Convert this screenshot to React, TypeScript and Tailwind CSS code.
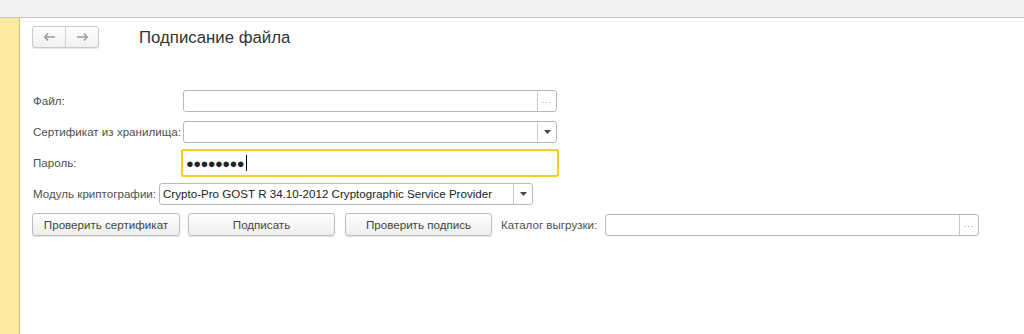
import React from "react";

const font = { fontFamily: '"Liberation Sans", Arial, sans-serif' };

function Dots() {
  return (
    <span className="flex h-full items-center text-[#999] text-[9px] tracking-[1px]">
      ...
    </span>
  );
}

function Tri() {
  return (
    <svg width="7" height="4" viewBox="0 0 7 4">
      <path d="M0 0h7L3.5 4z" fill="#444" />
    </svg>
  );
}

function Field({ w, btn }: { w: string; btn?: "dots" | "tri" }) {
  return (
    <div className={`${w} shrink-0 h-[22px] flex border border-[#b9b9b9] rounded-[3px] bg-white`}>
      <div className="flex-1" />
      {btn && (
        <div className="w-[19px] border-l border-[#c8c8c8] flex items-center justify-center">
          {btn === "dots" ? <Dots /> : <Tri />}
        </div>
      )}
    </div>
  );
}

function Btn({ children, w }: { children: React.ReactNode; w: string }) {
  return (
    <div
      className={`${w} h-[23px] flex items-center justify-center rounded-[3px] border border-[#bdbdbd] bg-gradient-to-b from-white to-[#eeeeee] shadow-[0_1px_1px_rgba(0,0,0,0.12)] text-[11.6px] text-[#444] whitespace-nowrap`}
    >
      {children}
    </div>
  );
}

export default function App() {
  return (
    <div className="w-[1024px] h-[334px] flex flex-col bg-white overflow-hidden" style={font}>
      <div className="h-[18px] bg-[#f2f2f2] border-b border-[#c4c4c4]" />
      <div className="flex flex-1">
        <div className="w-[20px] bg-[#fbeb9e] border-r border-[#d6bf63]" />
        <div className="flex-1 pl-[12px] flex flex-col">
          {/* header */}
          <div className="flex items-center mt-[8px] h-[22px]">
            <div className="w-[67px] h-[22px] flex rounded-[3px] border border-[#c9c9c9] bg-gradient-to-b from-white to-[#f0f0f0] shadow-[0_1px_1px_rgba(0,0,0,0.1)]">
              <div className="flex-1 flex items-center justify-center border-r border-[#d2d2d2]">
                <svg width="11" height="8" viewBox="0 0 11 8">
                  <path d="M4 0.5L0.8 4L4 7.5M1 4h10" stroke="#9a9a9a" strokeWidth="1.6" fill="none" />
                </svg>
              </div>
              <div className="flex-1 flex items-center justify-center">
                <svg width="11" height="8" viewBox="0 0 11 8">
                  <path d="M7 0.5L10.2 4L7 7.5M10 4H0" stroke="#9a9a9a" strokeWidth="1.6" fill="none" />
                </svg>
              </div>
            </div>
            <div className="ml-[40px] mt-[2px] text-[16.8px] text-[#333] whitespace-nowrap">Подписание файла</div>
          </div>

          {/* form */}
          <div className="mt-[42px] flex flex-col text-[11.6px] text-[#505050]">
            <div className="flex items-center h-[22px]">
              <div className="w-[151px] shrink-0 pl-[1px] whitespace-nowrap">Файл:</div>
              <Field w="w-[374px]" btn="dots" />
            </div>
            <div className="flex items-center h-[22px] mt-[9px]">
              <div className="w-[151px] shrink-0 pl-[1px] whitespace-nowrap">Сертификат из хранилища:</div>
              <Field w="w-[374px]" btn="tri" />
            </div>
            <div className="flex items-center h-[28px] mt-[6px]">
              <div className="w-[149px] shrink-0 pl-[1px] whitespace-nowrap">Пароль:</div>
              <div className="w-[378px] shrink-0 h-[28px] border-2 border-[#f7cb2e] rounded-[2px] bg-white flex items-center pl-[3px]">
                <span className="text-[#222] text-[13px] tracking-[-0.6px] leading-none">●●●●●●●●</span>
                <span className="w-px h-[16px] bg-black ml-[2px]" />
              </div>
            </div>
            <div className="flex items-center h-[22px] mt-[6px]">
              <div className="w-[127px] shrink-0 pl-[1px] whitespace-nowrap">Модуль криптографии:</div>
              <div className="w-[374px] shrink-0 h-[22px] flex border border-[#b9b9b9] rounded-[3px] bg-white">
                <div className="flex-1 flex items-center pl-[3px] text-[#222] whitespace-nowrap">
                  Crypto-Pro GOST R 34.10-2012 Cryptographic Service Provider
                </div>
                <div className="w-[19px] border-l border-[#c8c8c8] flex items-center justify-center">
                  <Tri />
                </div>
              </div>
            </div>
            <div className="flex items-center h-[23px] mt-[8px]">
              <Btn w="w-[148px]">Проверить сертификат</Btn>
              <div className="ml-[8px]">
                <Btn w="w-[147px]">Подписать</Btn>
              </div>
              <div className="ml-[10px]">
                <Btn w="w-[147px]">Проверить подпись</Btn>
              </div>
              <div className="ml-[9px] w-[104px] shrink-0 whitespace-nowrap">Каталог выгрузки:</div>
              <Field w="w-[374px]" btn="dots" />
            </div>
          </div>
        </div>
      </div>
    </div>
  );
}
